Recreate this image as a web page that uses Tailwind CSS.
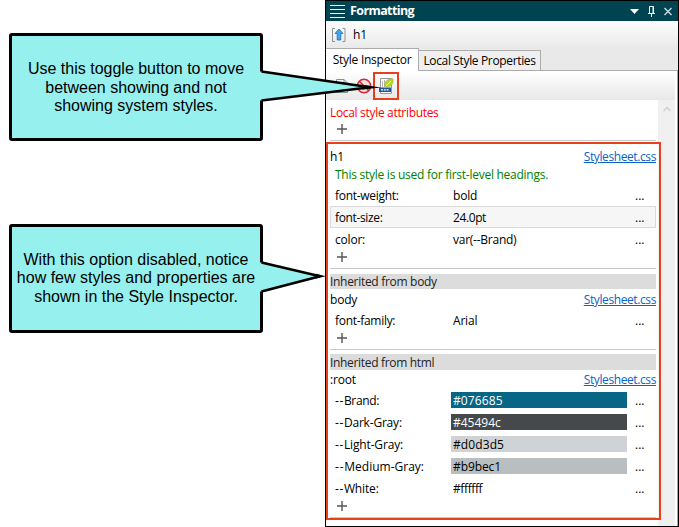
<!DOCTYPE html>
<html lang="en">
<head>
<meta charset="utf-8">
<title>Formatting</title>
<script src="https://cdn.jsdelivr.net/npm/@tailwindcss/browser@4"></script>
</head>
<body class="bg-white">
<div class="relative flex h-[527px] w-[679px] overflow-hidden bg-white">
  <!-- Callouts -->
  <aside class="flex w-[325px] shrink-0 flex-col pl-[9px] pt-[33px] font-['Liberation_Sans',Arial,sans-serif] text-[16px] leading-[18.6px] text-black">
    <div class="relative z-20 flex h-[108px] w-[254px] items-center justify-center rounded-[3px] border-[3px] border-black bg-[#96f0ee] pt-[2px] text-center">
      <svg class="absolute -top-[3px] left-[243px] h-[108px] w-[134px]" viewBox="255 33 134 108"><path d="M258 71.500H261.500L371 87.500L261.500 100.500H258Z" fill="#96f0ee"/><path d="M261.500 71.500L370 87.300L261.500 100.500" fill="none" stroke="#000" stroke-width="2.600" stroke-linejoin="bevel"/><path d="M362 84.800L381 87.500L362 89.500Z"/></svg>
      <p class="whitespace-nowrap">Use this toggle button to move<br>between showing and not<br>showing system styles.</p>
    </div>
    <div class="relative z-20 mt-[83px] flex h-[109px] w-[254px] items-center justify-center rounded-[3px] border-[3px] border-black bg-[#96f0ee] text-center">
      <svg class="absolute -top-[3px] left-[243px] h-[109px] w-[74px]" viewBox="255 224 74 109"><path d="M258 262.500H261.500L320 276L261.500 291.500H258Z" fill="#96f0ee"/><path d="M261.500 262.500L320 276.300L261.500 291.500" fill="none" stroke="#000" stroke-width="2.600" stroke-linejoin="bevel"/><path d="M316 273.800L326 276.300L316 278.500Z"/></svg>
      <p class="whitespace-nowrap">With this option disabled, notice<br>how few styles and properties are<br>shown in the Style Inspector.</p>
    </div>
  </aside>

  <!-- Formatting panel -->
  <main class="flex h-[527px] w-[354px] shrink-0 flex-col border border-black bg-white font-['Open_Sans','Noto_Sans',sans-serif] text-[12px] leading-[16px] text-black">
    <header class="flex h-[20px] shrink-0 items-center bg-[#004452] pl-[4px] pr-[5px] text-white">
      <svg class="h-[15px] w-[15px]" viewBox="0 0 15 15"><path d="M0 1.500H15M0 5.500H15M0 9.500H15M0 13.500H15" stroke="#fff" stroke-width="1"/></svg>
      <h1 class="ml-[5px] grow text-[12.5px] font-bold tracking-[-0.6px]">Formatting</h1>
      <svg class="h-[14px] w-[44px]" viewBox="629 3 44 14"><path d="M630 8H639L634.500 13Z" fill="#fff"/><path d="M649.500 12V5.500H653.500V12M648 12.500H655M651.500 12.500V16" fill="none" stroke="#fff"/><path d="M653 5V12" stroke="#fff"/><path d="M664.500 7L671.500 14M671.500 7L664.500 14" stroke="#c5d5d9" stroke-width="1.500"/></svg>
    </header>
    <div class="flex h-[50px] shrink-0 flex-col bg-linear-to-b from-[#fdfdfd] to-[#e9e9e9] to-55%">
      <div class="flex h-[27px] items-center pl-[6px]">
        <svg class="h-[14px] w-[14px]" viewBox="0 0 14 14"><path d="M3 .5H.5V13.500H3M10.500.5H13V13.500H10.500" fill="none" stroke="#909090"/><path d="M7 1L11 5.500H8.800V12H5.200V5.500H3Z" fill="#42a5ee" stroke="#1672bd" stroke-width=".8"/></svg>
        <span class="ml-[7px]">h1</span>
      </div>
      <div class="flex h-[23px] items-end">
        <div class="flex h-[23px] w-[93px] items-center justify-center whitespace-nowrap border-r border-t border-[#acacac] bg-white tracking-[-0.25px]">Style Inspector</div>
        <div class="flex h-[21px] w-[122px] items-center justify-center whitespace-nowrap border-b border-r border-t border-[#acacac] bg-[#efefef] tracking-[-0.35px]">Local Style Properties</div>
        <div class="h-px grow bg-[#acacac]"></div>
      </div>
    </div>
    <div class="flex grow border-r border-[#a5a5a5] pr-[2px]">
      <section class="relative z-10 flex grow flex-col">
        <div class="-mr-[17px] flex h-[29px] shrink-0 items-center bg-linear-to-b from-white to-[#e8e8e8] pl-[8px]">
          <svg class="h-[16px] w-[16px]" viewBox="0 0 16 16"><path d="M2.500 1.500H10L13.500 5V14.500H2.500ZM10 1.500V5H13.500" fill="#f4f7f7" stroke="#819394"/><path d="M5 7H11M5 10H11" stroke="#879"/></svg>
          <svg class="ml-[6px] h-[16px] w-[16px]" viewBox="0 0 16 16"><circle cx="8" cy="8" r="6.700" fill="#f8dddd" stroke="#d42835" stroke-width="1.500"/><path d="M3.300 3.300L12.700 12.700" stroke="#d42835" stroke-width="1.500"/></svg>
          <div class="ml-[1px] flex h-[28px] w-[26px] items-center justify-center border-2 border-[#e8401c]">
            <svg class="h-[16px] w-[16px]" viewBox="0 0 16 16"><path d="M2.500.5H13.500V15.500H2.500Z" fill="#fafafa" stroke="#999"/><path d="M4.500 3V9M6.500 2V9M8.500 4V9" stroke="#b5b5b5"/><path d="M1 9.500H13V14H1Z" fill="#22579a"/><path d="M3 11.800H11" stroke="#fff" stroke-width="1.300" stroke-dasharray="2 .8"/><path d="M7.300 8.500C5.500 4 9 .8 15 .8C15.800 6 12.500 10 7.300 8.500Z" fill="#b9d431" stroke="#9bb51d" stroke-width=".6"/><path d="M8 8L13 3" stroke="#eaf4a5"/></svg>
          </div>
        </div>
        <div class="flex flex-col pl-[4px]">
          <div class="mt-[5px] h-[16px] tracking-[-0.32px] text-[#f00]">Local style attributes</div>
          <svg class="ml-[6px] mt-[2px] h-[12px] w-[12px]" viewBox="0 0 12 12"><path d="M1 6H11M6 1V11" stroke="#555" stroke-width="1.400"/></svg>
          <div class="mt-[5px] h-px w-[326px] bg-[#c9c9c9]"></div>
        </div>
        <div class="-mr-[3px] mt-px flex h-[378px] shrink-0 flex-col border-2 border-[#e8401c] pl-[2px] pr-[3px]">
          <div class="mt-[5px] flex h-[15px] justify-between"><span>h1</span><a class="tracking-[-0.4px] text-[#0a64c8] underline">Stylesheet.css</a></div>
          <div class="mt-[3px] h-[16px] pl-[5px] tracking-[-0.26px] text-[#008000]">This style is used for first-level headings.</div>
          <div class="mt-[3px] flex h-[20px] items-center pl-[5px]"><span class="w-[118px] tracking-[-0.3px]">font-weight:</span><span class="grow tracking-[-0.2px]">bold</span><span class="w-[21px]">...</span></div>
          <div class="flex h-[22px] items-center border border-[#dadada] bg-[#f6f6f6] pl-[4px] pt-[2px]"><span class="w-[118px] tracking-[-0.35px]">font-size:</span><span class="grow tracking-[-0.4px]">24.0pt</span><span class="w-[20px]">...</span></div>
          <div class="flex h-[23px] items-center pl-[5px]"><span class="w-[118px] tracking-[-0.2px]">color:</span><span class="grow tracking-[-0.25px]">var(--Brand)</span><span class="w-[21px]">...</span></div>
          <svg class="ml-[6px] h-[12px] w-[12px]" viewBox="0 0 12 12"><path d="M1 6H11M6 1V11" stroke="#555" stroke-width="1.400"/></svg>
          <div class="mt-[5px] h-px bg-[#c9c9c9]"></div>
          <div class="mt-[5px] h-[15px] bg-[#dcdcdc] leading-[16px] tracking-[-0.3px] text-[#222]">Inherited from body</div>
          <div class="mt-[3px] flex h-[16px] justify-between"><span class="tracking-[-0.2px]">body</span><a class="tracking-[-0.4px] text-[#0a64c8] underline">Stylesheet.css</a></div>
          <div class="mt-[2px] flex h-[22px] items-center pl-[5px]"><span class="w-[118px] tracking-[-0.3px]">font-family:</span><span class="grow tracking-[-0.2px]">Arial</span><span class="w-[21px]">...</span></div>
          <svg class="ml-[6px] h-[12px] w-[12px]" viewBox="0 0 12 12"><path d="M1 6H11M6 1V11" stroke="#555" stroke-width="1.400"/></svg>
          <div class="mt-[5px] h-px bg-[#c9c9c9]"></div>
          <div class="mt-[4px] h-[16px] bg-[#dcdcdc] leading-[17px] tracking-[-0.32px] text-[#222]">Inherited from html</div>
          <div class="mt-[2px] flex h-[16px] justify-between"><span class="tracking-[-0.2px]">:root</span><a class="tracking-[-0.4px] text-[#0a64c8] underline">Stylesheet.css</a></div>
          <div class="mt-[4px] flex flex-col gap-[6px] pl-[5px] leading-[18px]">
            <div class="flex h-[16px]"><span class="w-[116px] tracking-[-0.35px]"><span class="tracking-[0.6px]">--</span>Brand:</span><span class="w-[176px] bg-[#076685] pl-[2px] tracking-[0.1px] text-white">#076685</span><span class="ml-[8px]">...</span></div>
            <div class="flex h-[16px]"><span class="w-[116px] tracking-[-0.2px]"><span class="tracking-[0.6px]">--</span>Dark-Gray:</span><span class="w-[176px] bg-[#45494c] pl-[2px] text-white">#45494c</span><span class="ml-[8px]">...</span></div>
            <div class="flex h-[16px]"><span class="w-[116px] tracking-[-0.15px]"><span class="tracking-[0.6px]">--</span>Light-Gray:</span><span class="w-[176px] bg-[#d0d3d5] pl-[2px] tracking-[0.1px]">#d0d3d5</span><span class="ml-[8px]">...</span></div>
            <div class="flex h-[16px]"><span class="w-[116px]"><span class="tracking-[0.8px]">--</span>Medium-Gray:</span><span class="w-[176px] bg-[#b9bec1] pl-[2px] tracking-[-0.1px]">#b9bec1</span><span class="ml-[8px]">...</span></div>
            <div class="flex h-[16px]"><span class="w-[116px] tracking-[-0.15px]"><span class="tracking-[0.6px]">--</span>White:</span><span class="w-[176px] pl-[2px] tracking-[-0.4px]">#ffffff</span><span class="ml-[8px]">...</span></div>
          </div>
          <svg class="ml-[6px] mt-[4px] h-[12px] w-[12px]" viewBox="0 0 12 12"><path d="M1 6H11M6 1V11" stroke="#555" stroke-width="1.400"/></svg>
          <div class="mt-auto h-px bg-[#c9c9c9]"></div>
        </div>
      </section>
      <div class="mt-[29px] w-[17px] shrink-0 bg-[#f0f0f0] pl-[5px] pt-[6px]"><svg class="h-[6px] w-[8px]" viewBox="0 0 8 6"><path d="M.5 5L4 1.500L7.500 5" fill="none" stroke="#cfcfcf" stroke-width="1.500"/></svg></div>
    </div>
  </main>
</div>
</body>
</html>
